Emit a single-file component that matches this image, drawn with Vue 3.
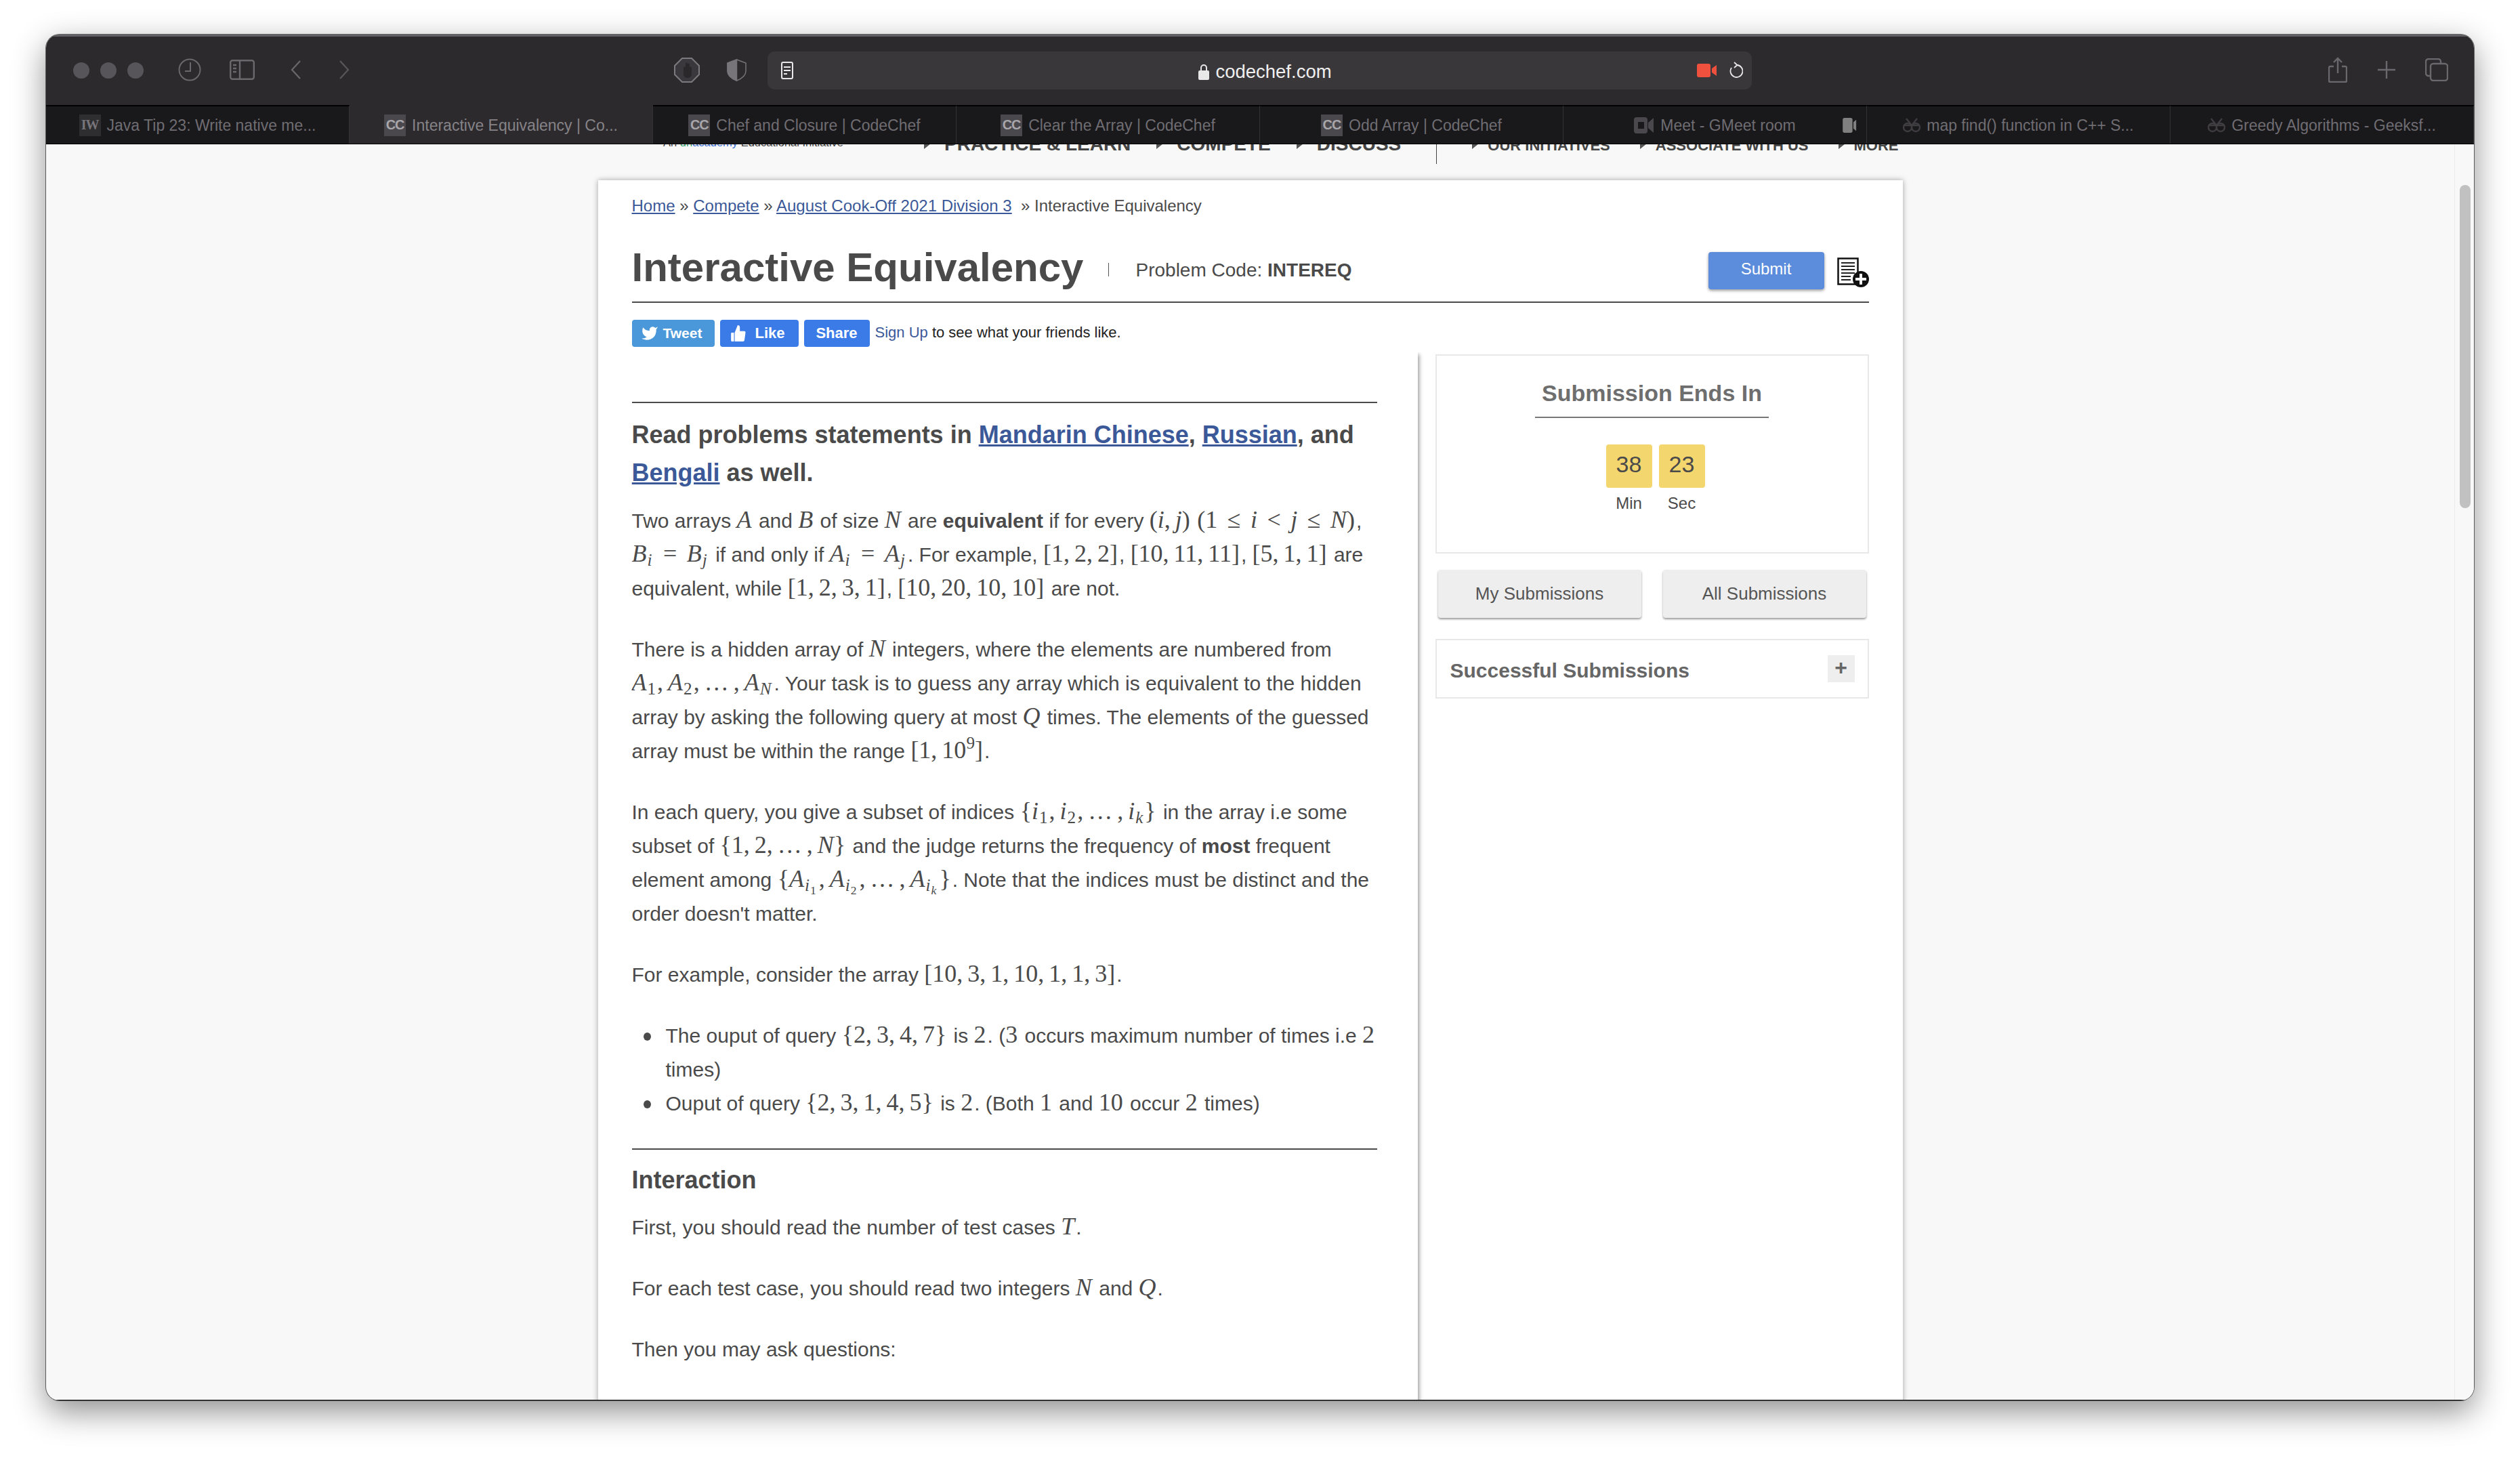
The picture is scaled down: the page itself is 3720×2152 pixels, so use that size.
<script setup>
const tabs = [
  { title: 'Java Tip 23: Write native me...', icon: 'IW', start: true },
  { title: 'Interactive Equivalency | Co...', icon: 'CC', active: true, start: true },
  { title: 'Chef and Closure | CodeChef', icon: 'CC' },
  { title: 'Clear the Array | CodeChef', icon: 'CC' },
  { title: 'Odd Array | CodeChef', icon: 'CC' },
  { title: 'Meet - GMeet room', icon: 'meet', muted: true },
  { title: 'map find() function in C++ S...', icon: 'gfg' },
  { title: 'Greedy Algorithms - Geeksf...', icon: 'gfg' }
];

const mainNav = ['PRACTICE & LEARN', 'COMPETE', 'DISCUSS'];
const subNav = ['OUR INITIATIVES', 'ASSOCIATE WITH US', 'MORE'];
</script>

<template>
  <div class="window">
    <div class="toolbar">
      <div class="lights"><span></span><span></span><span></span></div>
      <svg class="ic-clock" viewBox="0 0 34 34" fill="none" stroke="#6a686c" stroke-width="2"><circle cx="17" cy="17" r="15.500" /><path d="M18 6v13h-8" /></svg>
      <svg class="ic-side" viewBox="0 0 37 30" fill="none" stroke="#6a686c" stroke-width="2.4"><rect x="1.2" y="1.2" width="34.6" height="27.6" rx="3" /><path d="M15 1v28" /><path d="M5 8h5M5 13h5M5 18h5" /></svg>
      <svg class="ic-chev" viewBox="0 0 16 28" fill="none" stroke="#6a686c" stroke-width="2.2"><path d="M14 1 2 14l12 13" /></svg>
      <svg class="ic-chev next" viewBox="0 0 16 28" fill="none" stroke="#59575b" stroke-width="2.2"><path d="M2 1l12 13L2 27" /></svg>
      <svg class="ic-stop" viewBox="0 0 38 37" fill="none">
        <path d="M12 1h14l11 11v13L26 36H12L1 25V12z" fill="#3a383c" stroke="#7c7a7e" stroke-width="2" />
        <path d="M14 26V15a1.500 1.500 0 0 1 3 0V9a1.500 1.500 0 0 1 3 0v1a1.500 1.500 0 0 1 3 0v5a1.500 1.500 0 0 1 3 0v9c0 4-3 6-6 6s-4-1-6-4z" fill="#2a282b" />
      </svg>
      <svg class="ic-shield" viewBox="0 0 29 33" stroke="#77757a" stroke-width="1.5"><path d="M14.500 1 28 6v12c0 7-6 11-13.500 14C7 29 1 25 1 18V6z" fill="#2d2a2e" /><path d="M14.500 1 1 6v12c0 7 6 11 13.500 14z" fill="#77757a" /></svg>
      <div class="url">
        <svg class="ic-reader" viewBox="0 0 20 26" fill="none" stroke="#e8e8e8" stroke-width="2"><rect x="2" y="1" width="16" height="24" rx="2" /><path d="M5 8h10M5 13h10M5 18h5" /></svg>
        <div class="url-host">
          <svg class="ic-lock" viewBox="0 0 16 24"><path d="M4 11V6a4 4 0 0 1 8 0v5" fill="none" stroke="#e8e8e8" stroke-width="2" /><rect x="0" y="10" width="16" height="14" rx="2" fill="#e8e8e8" /></svg>
          <span>codechef.com</span>
        </div>
        <div class="url-right">
          <svg class="ic-rec" viewBox="0 0 29 20"><rect width="20" height="20" rx="3" fill="#f0513f" /><path d="M22 7l7-5v16l-7-5z" fill="#f0513f" /></svg>
          <svg class="ic-reload" viewBox="0 0 22 26" fill="none" stroke="#e8e8e8" stroke-width="1.8"><path d="M13 5a9 9 0 1 1-8 4" /><path d="M9 1l4.500 4L9 9" /></svg>
        </div>
      </div>
      <svg class="ic-share" viewBox="0 0 28 38" fill="none" stroke="#6a686c" stroke-width="2.4"><path d="M8 14H3a2 2 0 0 0-2 2v19a2 2 0 0 0 2 2h22a2 2 0 0 0 2-2V16a2 2 0 0 0-2-2h-5" /><path d="M14 24V2M8 8l6-6 6 6" /></svg>
      <svg class="ic-plus" viewBox="0 0 26 26" stroke="#6a686c" stroke-width="2.4"><path d="M13 0v26M0 13h26" /></svg>
      <svg class="ic-tabs" viewBox="0 0 34 34" fill="none" stroke="#6a686c" stroke-width="2.4"><rect x="8" y="8" width="25" height="25" rx="4" /><path d="M8 26H5a4 4 0 0 1-4-4V5a4 4 0 0 1 4-4h14a4 4 0 0 1 4 4v3" /></svg>
    </div>

    <div class="tabs">
      <div v-for="tab in tabs" :key="tab.title" class="tab" :class="{ active: tab.active, start: tab.start }">
        <span v-if="tab.icon === 'IW' || tab.icon === 'CC'" class="fav" :class="{ iw: tab.icon === 'IW' }">{{ tab.icon }}</span>
        <svg v-else-if="tab.icon === 'meet'" class="fav-meet" viewBox="0 0 30 30"><rect x="0" y="3" width="20" height="24" rx="4" fill="#4a484c" /><rect x="6" y="10" width="9" height="10" fill="#19181b" /><path d="M21 11l8-7v22l-8-7z" fill="#4a484c" /></svg>
        <svg v-else class="fav-gfg" viewBox="0 0 26 24" fill="none" stroke="#3f3d41" stroke-width="2.4"><circle cx="7" cy="15" r="6" /><circle cx="19" cy="15" r="6" /><path d="M1 12h24M5 2l8 10 8-10" /></svg>
        <span class="tab-title">{{ tab.title }}</span>
        <svg v-if="tab.muted" class="tab-mute" viewBox="0 0 30 32"><rect width="21" height="32" rx="4" fill="#808080" /><path d="M23 9l6-5v24l-6-5z" fill="#808080" /></svg>
      </div>
    </div>

    <div class="viewport">
      <div class="page">
        <div class="site-nav">
          <div class="tagline">An <span class="una"><em>un</em>academy</span> Educational Initiative</div>
          <div v-for="item in mainNav" :key="item" class="nav-big"><span class="tri"></span>{{ item }}</div>
          <div class="nav-rule"></div>
          <div v-for="item in subNav" :key="item" class="nav-small"><span class="tri"></span>{{ item }}</div>
        </div>

        <div class="card">
          <div class="crumbs"><a>Home</a> » <a>Compete</a> » <a>August Cook-Off 2021 Division 3</a> &nbsp;» Interactive Equivalency</div>

          <div class="title-row">
            <h1>Interactive Equivalency</h1>
            <span class="title-rule"></span>
            <span class="code">Problem Code: <b>INTEREQ</b></span>
            <button class="submit">Submit</button>
            <svg class="ic-doc" viewBox="0 0 47 44">
              <rect x="1.500" y="1.500" width="29" height="38" fill="#fff" stroke="#111" stroke-width="2.500" />
              <path d="M6 8h20M6 13h20M6 18h20M6 23h20M6 28h14M6 33h14" stroke="#222" stroke-width="2" />
              <circle cx="35" cy="32" r="12" fill="#111" />
              <path d="M35 24v16M27 32h16" stroke="#fff" stroke-width="4" />
            </svg>
          </div>

          <div class="social">
            <span class="sbtn tweet">
              <svg viewBox="0 0 24 24" fill="#fff"><path d="M23 3a10.900 10.900 0 0 1-3.280 1.530 4.480 4.480 0 0 0-7.860 3v1A10.660 10.660 0 0 1 3 4s-4 9 5 13a11.640 11.640 0 0 1-7 2c9 5 20 0 20-11.500a4.500 4.500 0 0 0-.08-.83A7.720 7.720 0 0 0 23 3z" /></svg>
              Tweet
            </span>
            <span class="sbtn like">
              <svg viewBox="0 0 24 24" fill="#fff"><path d="M14 9V4a3 3 0 0 0-3-3l-4 10v12h11.280a2 2 0 0 0 2-1.700l1.380-10a2 2 0 0 0-2-2.300zM6 23H3a1 1 0 0 1-1-1v-10a1 1 0 0 1 1-1h3z" /></svg>
              Like
            </span>
            <span class="sbtn share">Share</span>
            <span class="social-text"><span class="signup">Sign Up</span> to see what your friends like.</span>
          </div>

          <div class="columns">
            <div class="statement">
              <hr class="first" />
              <h3 class="lead">Read problems statements in <a>Mandarin Chinese</a>, <a>Russian</a>, and<br /><a>Bengali</a> as well.</h3>

              <p>Two arrays <span class="m"><i>A</i></span> and <span class="m"><i>B</i></span> of size <span class="m"><i>N</i></span> are <b>equivalent</b> if for every <span class="m">(<i>i</i>, <i>j</i>)</span> <span class="m">(1<span class="r">≤</span><i>i</i><span class="r">&lt;</span><i>j</i><span class="r">≤</span><i>N</i>)</span>,<br />
                <span class="m"><i>B</i><sub><i>i</i></sub><span class="r">=</span><i>B</i><sub><i>j</i></sub></span> if and only if <span class="m"><i>A</i><sub><i>i</i></sub><span class="r">=</span><i>A</i><sub><i>j</i></sub></span>. For example, <span class="m">[1, 2, 2]</span>, <span class="m">[10, 11, 11]</span>, <span class="m">[5, 1, 1]</span> are<br />
                equivalent, while <span class="m">[1, 2, 3, 1]</span>, <span class="m">[10, 20, 10, 10]</span> are not.</p>

              <p>There is a hidden array of <span class="m"><i>N</i></span> integers, where the elements are numbered from<br />
                <span class="m"><i>A</i><sub>1</sub>, <i>A</i><sub>2</sub>, … , <i>A</i><sub><i>N</i></sub></span>. Your task is to guess any array which is equivalent to the hidden<br />
                array by asking the following query at most <span class="m"><i>Q</i></span> times. The elements of the guessed<br />
                array must be within the range <span class="m">[1, 10<sup>9</sup>]</span>.</p>

              <p>In each query, you give a subset of indices <span class="m">{<i>i</i><sub>1</sub>, <i>i</i><sub>2</sub>, … , <i>i</i><sub><i>k</i></sub>}</span> in the array i.e some<br />
                subset of <span class="m">{1, 2, … , <i>N</i>}</span> and the judge returns the frequency of <b>most</b> frequent<br />
                element among <span class="m">{<i>A</i><sub><i>i</i><sub>1</sub></sub>, <i>A</i><sub><i>i</i><sub>2</sub></sub>, … , <i>A</i><sub><i>i</i><sub><i>k</i></sub></sub>}</span>. Note that the indices must be distinct and the<br />
                order doesn't matter.</p>

              <p>For example, consider the array <span class="m">[10, 3, 1, 10, 1, 1, 3]</span>.</p>

              <ul>
                <li>The ouput of query <span class="m">{2, 3, 4, 7}</span> is <span class="m">2</span>. (<span class="m">3</span> occurs maximum number of times i.e <span class="m">2</span><br />times)</li>
                <li>Ouput of query <span class="m">{2, 3, 1, 4, 5}</span> is <span class="m">2</span>. (Both <span class="m">1</span> and <span class="m">10</span> occur <span class="m">2</span> times)</li>
              </ul>

              <hr class="second" />
              <h3 class="section">Interaction</h3>
              <p class="after-head">First, you should read the number of test cases <span class="m"><i>T</i></span>.</p>
              <p>For each test case, you should read two integers <span class="m"><i>N</i></span> and <span class="m"><i>Q</i></span>.</p>
              <p>Then you may ask questions:</p>
            </div>

            <div class="side">
              <div class="timer-box">
                <div class="timer-title">Submission Ends In</div>
                <div class="timer">
                  <span class="cell">38</span>
                  <span class="cell">23</span>
                  <span class="unit">Min</span>
                  <span class="unit">Sec</span>
                </div>
              </div>
              <div class="side-btns">
                <button>My Submissions</button>
                <button>All Submissions</button>
              </div>
              <div class="success">
                <span>Successful Submissions</span>
                <span class="expand">+</span>
              </div>
            </div>
          </div>
        </div>
      </div>
      <div class="scrollbar"><div class="thumb"></div></div>
    </div>
  </div>
</template>

<style>
html {
  overflow: hidden;
  background: #fff;
}
body {
  margin: 0;
  min-height: 2152px;
  background: #fff;
}
</style>

<style scoped>
.window {
  width: 3584px;
  height: 2016px;
  margin: 0 0 0 68px;
  position: relative;
  top: 51px;
  border-radius: 20px;
  overflow: hidden;
  display: flex;
  flex-direction: column;
  background: #f8f8f8;
  font-family: "Liberation Sans", Arial, sans-serif;
  box-shadow: 0 0 0 1px rgba(0, 0, 0, 0.55), 0 16px 48px rgba(0, 0, 0, 0.45);
}

/* toolbar */
.toolbar {
  height: 104px;
  flex: none;
  box-sizing: border-box;
  background: #2d2a2e;
  border-top: 3px solid #626064;
  padding: 0 0 3px 40px;
  display: flex;
  align-items: center;
}
.lights { display: flex; gap: 16px; width: 104px; margin-top: 2px; }
.lights span { width: 24px; height: 24px; border-radius: 50%; background: #575559; }
.ic-clock { width: 34px; height: 34px; margin-left: 51px; }
.ic-side { width: 37px; height: 30px; margin-left: 42px; }
.ic-chev { width: 16px; height: 28px; margin-left: 53px; }
.ic-chev.next { margin-left: 55px; }
.ic-stop { width: 38px; height: 37px; margin-left: 479px; }
.ic-shield { width: 29px; height: 33px; margin-left: 40px; }
.url {
  width: 1453px;
  height: 56px;
  margin-left: 31px;
  margin-top: 2px;
  padding: 0 12px 0 19px;
  box-sizing: border-box;
  border-radius: 10px;
  background: #3a373b;
  display: grid;
  grid-template-columns: 1fr auto 1fr;
  align-items: center;
}
.ic-reader { width: 20px; height: 26px; }
.url-host {
  display: flex;
  align-items: center;
  gap: 9px;
  margin: 3px 0 0 9px;
  color: #efefef;
  font-size: 27.500px;
}
.ic-lock { width: 16px; height: 24px; }
.url-right { display: flex; justify-content: flex-end; align-items: center; gap: 17px; }
.ic-rec { width: 29px; height: 20px; }
.ic-reload { width: 22px; height: 26px; margin-right: 1px; }
.ic-share { width: 28px; height: 38px; margin-left: 851px; }
.ic-plus { width: 26px; height: 26px; margin-left: 45px; }
.ic-tabs { width: 34px; height: 34px; margin-left: 44px; }

/* tabs */
.tabs {
  height: 58px;
  flex: none;
  display: grid;
  grid-template-columns: repeat(8, 1fr);
  background: #19181b;
  border-bottom: 1px solid #000;
  box-sizing: border-box;
}
.tab {
  position: relative;
  box-sizing: border-box;
  border-top: 2px solid #000;
  border-right: 1px solid #333135;
  display: flex;
  align-items: center;
  justify-content: center;
  gap: 9px;
  color: #6f6d72;
  font-size: 23px;
  white-space: nowrap;
}
.tab-title { padding-top: 1px; }
.tab.active {
  background: #2d2a2e;
  border-top-color: #2d2a2e;
  color: #858387;
}
.fav {
  width: 32px;
  height: 32px;
  background: #4a484c;
  color: #a8a6aa;
  font-size: 20px;
  font-weight: bold;
  letter-spacing: -1px;
  display: flex;
  align-items: center;
  justify-content: center;
}
.fav.iw { background: #2e2d30; color: #77757a; font-family: "Liberation Serif", serif; }
.fav-meet { width: 30px; height: 30px; }
.fav-gfg { width: 26px; height: 24px; }
.tab-mute { position: absolute; left: 408px; top: 17px; width: 29px; height: 22px; }

/* page */
.viewport {
  flex: 1;
  min-height: 0;
  display: flex;
  overflow: hidden;
  border-bottom: 1px solid #111;
}
.page {
  flex: 1;
  min-width: 0;
  color: #4a4a4a;
}
.site-nav {
  height: 40px;
  margin-top: -20px;
  padding-left: 911px;
  display: flex;
  align-items: baseline;
  color: #444;
  font-weight: bold;
  white-space: nowrap;
}
.tagline {
  align-self: flex-start;
  width: 385px;
  margin-top: 5px;
  font-size: 16.500px;
  line-height: 24px;
  font-weight: normal;
}
.una { color: #3d6fd0; }
.una em { color: #2fa36b; font-style: normal; }
.nav-big { font-size: 28px; line-height: 40px; margin-right: 38px; }
.nav-small { font-size: 22px; line-height: 40px; margin-right: 44px; }
.tri {
  display: inline-block;
  width: 0;
  height: 0;
  margin-right: 20px;
  border-left: 10px solid #555;
  border-top: 8px solid transparent;
  border-bottom: 8px solid transparent;
  vertical-align: 2px;
}
.nav-rule {
  align-self: flex-start;
  width: 1px;
  height: 49px;
  margin: 0 52px 0 14px;
  background: #444;
}
.nav-small .tri { margin-right: 13px; }

.card {
  width: 1926px;
  margin: 33px auto 0;
  padding: 20px 50px 0;
  box-sizing: border-box;
  height: 1900px;
  background: #fff;
  box-shadow: 0 0 8px rgba(0, 0, 0, 0.35);
}
a {
  color: #3b5998;
  text-decoration: underline;
}
.crumbs {
  font-size: 24px;
  line-height: 36px;
}
.title-row {
  margin-top: 37px;
  padding-bottom: 14px;
  border-bottom: 2px solid #4a4a4a;
  display: flex;
  align-items: center;
}
h1 {
  margin: 0;
  font-size: 60px;
  line-height: 72px;
  font-weight: bold;
}
.title-rule {
  width: 1px;
  height: 20px;
  margin: 6px 0 0 37px;
  background: #555;
}
.code {
  margin: 7px 0 0 39px;
  font-size: 28px;
  line-height: 40px;
}
.submit {
  width: 171px;
  height: 55px;
  margin: 9px 0 0 auto;
  padding: 0 0 6px;
  border: none;
  border-radius: 4px;
  background: #5b8ddc;
  color: #fff;
  font: 24px "Liberation Sans", Arial, sans-serif;
  box-shadow: 0 2px 4px rgba(0, 0, 0, 0.4);
}
.ic-doc {
  width: 47px;
  height: 44px;
  margin: 14px 0 0 19px;
}
.social {
  margin-top: 25px;
  height: 40px;
  display: flex;
  align-items: center;
}
.sbtn {
  height: 40px;
  box-sizing: border-box;
  border-radius: 4px;
  color: #fff;
  font-size: 22px;
  font-weight: bold;
  display: flex;
  align-items: center;
  margin-right: 8px;
}
.sbtn svg { width: 26px; height: 26px; }
.tweet { width: 122px; background: #4a98d9; padding-left: 13px; gap: 7px; font-size: 21px; }
.like { width: 116px; background: #3b7be8; padding-left: 14px; gap: 12px; }
.share { width: 97px; background: #3b7be8; justify-content: center; }
.social-text {
  font-size: 22px;
  color: #222;
  margin-top: -2px;
}
.signup { color: #3b5998; }
.columns {
  margin-top: 8px;
  display: flex;
  align-items: flex-start;
}
.statement {
  width: 1160px;
  height: 1600px;
  flex: none;
  box-sizing: border-box;
  padding-right: 60px;
  padding-top: 73px;
  box-shadow: 5px 0 6px -3px rgba(0, 0, 0, 0.4);
  clip-path: inset(0 -12px 0 0);
  font-size: 30px;
  line-height: 50px;
  white-space: nowrap;
}
hr {
  height: 2px;
  margin: 0;
  border: none;
  background: #4a4a4a;
}
h3 {
  margin: 0;
  font-size: 36px;
  font-weight: bold;
}
.lead { margin-top: 19px; line-height: 56px; }
p { margin: 40px 0 0; }
.lead + p { margin-top: 18px; }
ul {
  margin: 40px 0 0;
  padding-left: 50px;
  list-style: none;
}
li { position: relative; }
li::before {
  content: "";
  position: absolute;
  left: -33px;
  top: 20px;
  width: 11px;
  height: 12px;
  border-radius: 50%;
  background: #4a4a4a;
}
.second { margin-top: 41px; }
.section { margin-top: 20px; line-height: 50px; }
p.after-head { margin-top: 20px; }

/* math */
.m {
  font-family: "Liberation Serif", "Times New Roman", serif;
  font-size: 36px;
  line-height: 1;
  word-spacing: -2px;
  margin-right: 2px;
}
.r { margin: 0 14.500px; }
sub, sup {
  font-size: 0.7em;
  line-height: 0;
}
sub {
  vertical-align: -0.25em;
  margin: 0 2px 0 1px;
}
sup { vertical-align: 0.55em; }

/* right column */
.side {
  width: 640px;
  margin: 3px 0 0 26px;
  flex: none;
}
.timer-box {
  height: 294px;
  box-sizing: border-box;
  border: 2px solid #e8e8e8;
  padding-top: 33px;
  display: flex;
  flex-direction: column;
  align-items: center;
}
.timer-title {
  padding: 0 10px 13px;
  border-bottom: 2px solid #777;
  color: #6e6e6e;
  font-size: 34px;
  line-height: 44px;
  font-weight: bold;
}
.timer {
  margin-top: 39px;
  padding-left: 10px;
  display: grid;
  grid-template-columns: 68px 68px;
  column-gap: 10px;
  row-gap: 8px;
  text-align: center;
}
.cell {
  height: 64px;
  border-radius: 4px;
  background: #f4d66f;
  font-size: 34px;
  line-height: 58px;
}
.unit {
  font-size: 24px;
  line-height: 30px;
}
.side-btns {
  margin-top: 24px;
  padding: 0 4px;
  display: flex;
  gap: 32px;
}
.side-btns button {
  flex: 1;
  height: 71px;
  border: none;
  border-radius: 4px;
  background: #eee;
  color: #555;
  font: 26px "Liberation Sans", Arial, sans-serif;
  box-shadow: 0 2px 3px rgba(0, 0, 0, 0.4);
}
.success {
  margin-top: 31px;
  height: 88px;
  box-sizing: border-box;
  border: 2px solid #e8e8e8;
  padding: 0 19px 0 20px;
  display: flex;
  align-items: center;
  justify-content: space-between;
  color: #666;
  font-size: 30px;
  font-weight: bold;
}
.success > span:first-child { margin-top: 6px; }
.expand {
  width: 40px;
  height: 40px;
  background: #eee;
  text-align: center;
  line-height: 36px;
  font-size: 32px;
}
.scrollbar {
  width: 29px;
  flex: none;
  box-sizing: border-box;
  border-left: 1px solid #ececec;
  background: #f8f8f8;
  padding: 60px 5px 0 7px;
}
.thumb {
  height: 477px;
  border-radius: 8px;
  background: #c1c1c1;
}
</style>
